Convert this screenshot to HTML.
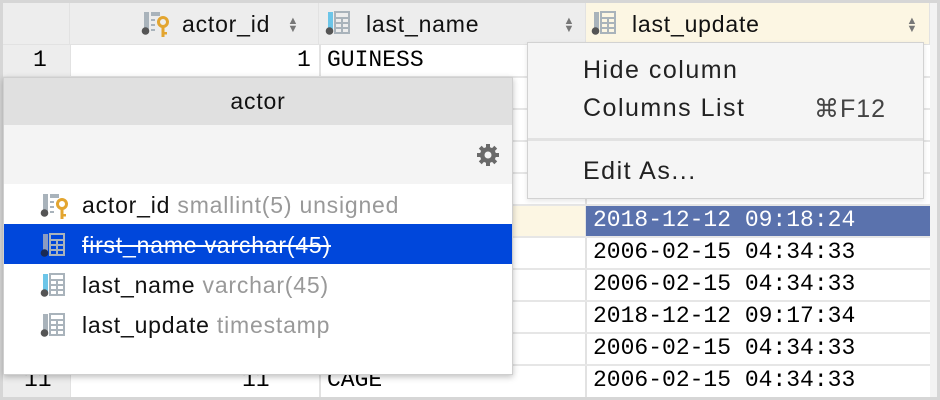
<!DOCTYPE html>
<html><head><meta charset="utf-8"><style>
*{margin:0;padding:0;box-sizing:border-box}
body{width:940px;height:400px;overflow:hidden;background:#d6d6d6;font-family:"Liberation Sans",sans-serif;position:relative}
.abs{position:absolute;white-space:nowrap}
.grid{left:3px;top:3px;width:934px;height:394px;background:#fff}
.hdr{top:3px;height:41px;background:#ededed;border-right:1px solid #e2e2e2}
.sans{font-size:23px;letter-spacing:0.8px;color:#111}
.mono{font-family:"Liberation Mono",monospace;font-size:23px;color:#000}
.arr{font-size:11px;color:#777;line-height:8px;text-align:center;width:12px}
.menu{font-size:25px;letter-spacing:1.5px;color:#222}
</style></head><body>
<div class="abs grid"></div>
<div class="abs hdr" style="left:3px;width:67px"></div>
<div class="abs hdr" style="left:70px;width:249px"></div>
<div class="abs hdr" style="left:319px;width:267px"></div>
<div class="abs hdr" style="left:586px;width:344px;background:#fcf6e3"></div>
<div class="abs" style="left:3px;top:44px;width:927px;height:1px;background:#e2e2e2"></div>

<svg class="abs" style="left:141px;top:10px" width="36" height="30" viewBox="0 0 36 30">
<rect x="3" y="2" width="5" height="19" fill="#a9b3bb"/><circle cx="4.5" cy="21" r="3.8" fill="#555"/>
<rect x="10" y="2" width="9" height="4" fill="#a9b3bb"/><rect x="10" y="9" width="4" height="2" fill="#a9b3bb"/><rect x="10" y="14" width="4" height="2" fill="#a9b3bb"/><rect x="10" y="19" width="4" height="2" fill="#a9b3bb"/>
<circle cx="22" cy="12" r="4.5" fill="none" stroke="#e3a530" stroke-width="3"/><rect x="20.5" y="15" width="3" height="12" fill="#e3a530"/><rect x="22" y="22" width="4" height="2.5" fill="#e3a530"/></svg>
<div class="abs sans" style="left:182px;top:11px">actor_id</div>
<div class="abs arr" style="left:287px;top:17px">▲<br>▼</div>

<svg class="abs" style="left:325px;top:10px" width="26" height="30" viewBox="0 0 26 30">
<rect x="3" y="2" width="5" height="19" fill="#6cc5e8"/><circle cx="4.5" cy="21" r="3.8" fill="#555"/>
<path d="M10 2h14v21H10zM10 8h14M10 13h14M10 18h14M17 8v15" fill="none" stroke="#a9b3bb" stroke-width="2"/></svg>
<div class="abs sans" style="left:366px;top:11px">last_name</div>
<div class="abs arr" style="left:563px;top:17px">▲<br>▼</div>

<svg class="abs" style="left:591px;top:10px" width="26" height="30" viewBox="0 0 26 30">
<rect x="3" y="2" width="5" height="19" fill="#a9b3bb"/><circle cx="4.5" cy="21" r="3.8" fill="#555"/>
<path d="M10 2h14v21H10zM10 8h14M10 13h14M10 18h14M17 8v15" fill="none" stroke="#a9b3bb" stroke-width="2"/></svg>
<div class="abs sans" style="left:632px;top:11px">last_update</div>
<div class="abs arr" style="left:906px;top:17px">▲<br>▼</div>

<div class="abs" style="left:3px;top:45px;width:67px;height:352px;background:#ededed"></div>
<div class="abs mono" style="left:33px;top:47px">1</div>
<div class="abs mono" style="left:297px;top:47px">1</div>
<div class="abs mono" style="left:327px;top:47px">GUINESS</div>
<div class="abs" style="left:70px;top:45px;width:1px;height:352px;background:#e2e2e2"></div>
<div class="abs" style="left:319px;top:45px;width:2px;height:352px;background:#e2e2e2"></div>
<div class="abs" style="left:585px;top:45px;width:2px;height:352px;background:#e2e2e2"></div>
<div class="abs" style="left:3px;top:76px;width:927px;height:2px;background:#e6e6e6"></div>
<div class="abs" style="left:3px;top:108px;width:927px;height:2px;background:#e6e6e6"></div>
<div class="abs" style="left:3px;top:140px;width:927px;height:2px;background:#e6e6e6"></div>
<div class="abs" style="left:3px;top:172px;width:927px;height:2px;background:#e6e6e6"></div>
<div class="abs" style="left:3px;top:204px;width:927px;height:2px;background:#e6e6e6"></div>
<div class="abs" style="left:3px;top:236px;width:927px;height:2px;background:#e6e6e6"></div>
<div class="abs" style="left:3px;top:268px;width:927px;height:2px;background:#e6e6e6"></div>
<div class="abs" style="left:3px;top:300px;width:927px;height:2px;background:#e6e6e6"></div>
<div class="abs" style="left:3px;top:332px;width:927px;height:2px;background:#e6e6e6"></div>
<div class="abs" style="left:3px;top:364px;width:927px;height:2px;background:#e6e6e6"></div>
<div class="abs" style="left:71px;top:206px;width:514px;height:30px;background:#fcf6e3"></div>
<div class="abs" style="left:586px;top:206px;width:350px;height:30px;background:#5a72ad"></div>
<div class="abs mono" style="left:593px;top:207px;color:#fff">2018-12-12 09:18:24</div>
<div class="abs mono" style="left:593px;top:239px">2006-02-15 04:34:33</div>
<div class="abs mono" style="left:593px;top:271px">2006-02-15 04:34:33</div>
<div class="abs mono" style="left:593px;top:303px">2018-12-12 09:17:34</div>
<div class="abs mono" style="left:593px;top:335px">2006-02-15 04:34:33</div>
<div class="abs mono" style="left:593px;top:367px">2006-02-15 04:34:33</div>
<div class="abs mono" style="left:24px;top:367px">11</div>
<div class="abs mono" style="left:242px;top:367px">11</div>
<div class="abs mono" style="left:327px;top:367px">CAGE</div>
<div class="abs" style="left:930px;top:3px;width:7px;height:394px;background:#f3f3f3"></div>

<div class="abs" style="left:3px;top:77px;width:510px;height:298px;background:#fff;border:1px solid #cfcfcf;box-shadow:0 2px 6px rgba(0,0,0,.25)">
 <div style="height:47px;background:#e0e0e0;text-align:center;font-size:23px;letter-spacing:0.8px;line-height:47px;color:#111">actor</div>
 <div style="height:59px;background:#f4f4f4;position:relative">
  <svg style="position:absolute;left:472px;top:18px" width="24" height="24" viewBox="0 0 24 24"><g fill="#6a6a6a"><circle cx="12" cy="12" r="8"/><g id="t"><rect x="10" y="1" width="4" height="5"/><rect x="10" y="18" width="4" height="5"/><rect x="1" y="10" width="5" height="4"/><rect x="18" y="10" width="5" height="4"/></g><use href="#t" transform="rotate(45 12 12)"/></g><circle cx="12" cy="12" r="3.5" fill="#f4f4f4"/></svg>
 </div>
</div>
<div class="abs" style="left:4px;top:224px;width:508px;height:40px;background:#0047db"></div>
<svg class="abs" style="left:40px;top:192px" width="36" height="30" viewBox="0 0 36 30">
<rect x="3" y="2" width="5" height="19" fill="#a9b3bb"/><circle cx="4.5" cy="21" r="3.8" fill="#555"/>
<rect x="10" y="2" width="9" height="4" fill="#a9b3bb"/><rect x="10" y="9" width="4" height="2" fill="#a9b3bb"/><rect x="10" y="14" width="4" height="2" fill="#a9b3bb"/><rect x="10" y="19" width="4" height="2" fill="#a9b3bb"/>
<circle cx="22" cy="12" r="4.5" fill="none" stroke="#e3a530" stroke-width="3"/><rect x="20.5" y="15" width="3" height="12" fill="#e3a530"/><rect x="22" y="22" width="4" height="2.5" fill="#e3a530"/></svg>
<div class="abs sans" style="left:82px;top:192px">actor_id <span style="color:#999">smallint(5) unsigned</span></div>
<svg class="abs" style="left:40px;top:232px" width="26" height="30" viewBox="0 0 26 30">
<rect x="3" y="2" width="5" height="19" fill="#8a9bc2"/><circle cx="4.5" cy="21" r="3.8" fill="#1a2a55"/>
<path d="M10 2h14v21H10zM10 8h14M10 13h14M10 18h14M17 8v15" fill="none" stroke="#a9b3bb" stroke-width="2"/></svg>
<div class="abs sans" style="left:82px;top:232px;color:#fff;text-decoration:line-through">first_name varchar(45)</div>
<svg class="abs" style="left:40px;top:272px" width="26" height="30" viewBox="0 0 26 30">
<rect x="3" y="2" width="5" height="19" fill="#6cc5e8"/><circle cx="4.5" cy="21" r="3.8" fill="#555"/>
<path d="M10 2h14v21H10zM10 8h14M10 13h14M10 18h14M17 8v15" fill="none" stroke="#a9b3bb" stroke-width="2"/></svg>
<div class="abs sans" style="left:82px;top:272px">last_name <span style="color:#999">varchar(45)</span></div>
<svg class="abs" style="left:40px;top:312px" width="26" height="30" viewBox="0 0 26 30">
<rect x="3" y="2" width="5" height="19" fill="#a9b3bb"/><circle cx="4.5" cy="21" r="3.8" fill="#555"/>
<path d="M10 2h14v21H10zM10 8h14M10 13h14M10 18h14M17 8v15" fill="none" stroke="#a9b3bb" stroke-width="2"/></svg>
<div class="abs sans" style="left:82px;top:312px">last_update <span style="color:#999">timestamp</span></div>

<div class="abs" style="left:527px;top:42px;width:397px;height:157px;background:#f5f5f5;border:1px solid #d2d2d2;box-shadow:0 2px 5px rgba(0,0,0,.1)">
 <div class="abs" style="left:0;top:95px;width:395px;height:3px;background:#e2e2e2"></div>
</div>
<div class="abs menu" style="left:583px;top:56px">Hide column</div>
<div class="abs menu" style="left:583px;top:94px">Columns List</div>
<div class="abs menu" style="left:814px;top:94px;color:#444;letter-spacing:1px">⌘F12</div>
<div class="abs menu" style="left:583px;top:157px">Edit As...</div>
</body></html>
